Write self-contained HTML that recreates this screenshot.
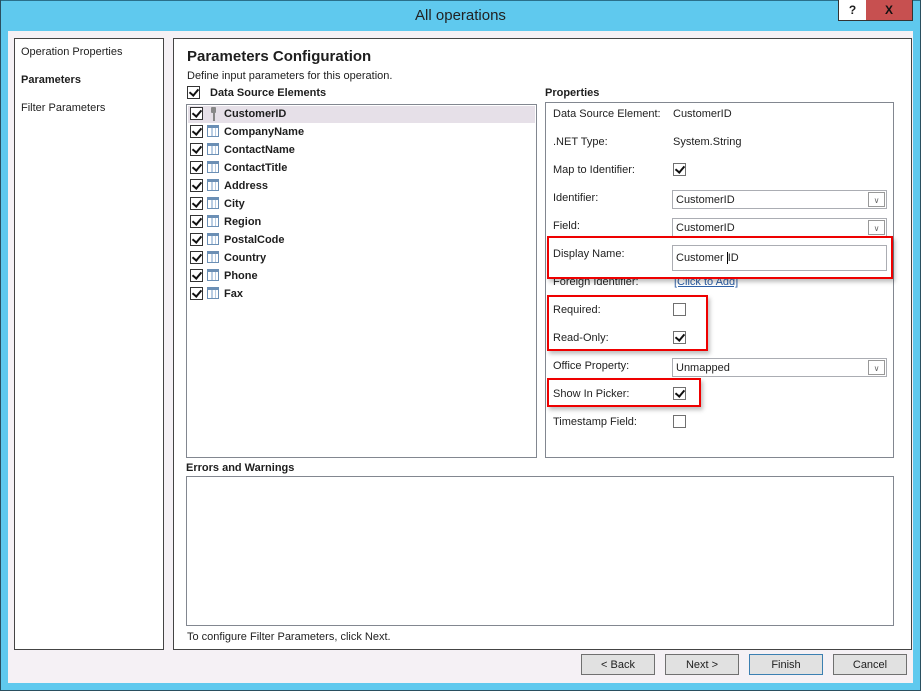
<!DOCTYPE html>
<html><head><meta charset="utf-8"><style>
*{margin:0;padding:0;box-sizing:border-box}
body{width:921px;height:691px;position:relative;overflow:hidden;background:#5fc9ee;font-family:"Liberation Sans",sans-serif;font-size:11px;color:#1e1e1e}
.a{position:absolute;white-space:nowrap}
.cb{position:absolute;width:13px;height:13px;border:1px solid #333;background:#fff}
.cb.k::after{content:"";position:absolute;left:3px;top:0px;width:4px;height:7px;border:solid #111;border-width:0 2px 2px 0;transform:rotate(40deg)}
.pc{border-color:#707070}
.ic{position:absolute;width:12px;height:12px;border:1px solid #6b8fb5;background:linear-gradient(90deg,#fff 0,#fff 3px,#b9cde3 3px,#b9cde3 5px,#fff 5px,#fff 7px,#b9cde3 7px,#b9cde3 8px,#fff 8px)}
.ic::before{content:"";position:absolute;left:0;right:0;top:0;height:2px;background:#6b8fb5}
.row{font-weight:bold;font-size:11px}
.lbl{color:#222}
.combo{position:absolute;left:672px;width:215px;height:19px;border:1px solid #abadb3;background:#fff;padding:3px 3px;font-size:11px}
.combo i{position:absolute;right:1px;top:1px;width:17px;height:15px;border:1px solid #999;background:#fff;font-style:normal;font-size:8px;color:#666;text-align:center;line-height:15px}
.red{position:absolute;border:2px solid #e00;box-shadow:2px 3px 4px rgba(0,0,0,.25)}
.btn{position:absolute;top:654px;width:74px;height:21px;border:1px solid #707070;background:#e1e1e1;text-align:center;line-height:20px;font-size:11px}
</style></head><body>
<div class="a" style="left:0;top:0;width:921px;height:31px;background:#5fc9ee;border-top:1px solid #2a6f8a"></div>
<div class="a" style="left:0;top:7px;width:921px;text-align:center;font-size:15px;color:#222">All operations</div>
<div class="a" style="left:838px;top:0;width:29px;height:21px;background:#fff;border:1px solid #333;border-top:none;text-align:center;font-weight:bold;font-size:12px;line-height:20px">?</div>
<div class="a" style="left:866px;top:0;width:47px;height:21px;background:#c75050;border:1px solid #333;border-top:none;border-left:none;text-align:center;font-weight:bold;font-size:12px;line-height:20px;color:#111">X</div>
<div class="a" style="left:8px;top:31px;width:905px;height:652px;background:#f5f1f5"></div>
<div class="a" style="left:0;top:0;width:1px;height:691px;background:#2a4f60"></div>
<div class="a" style="left:920px;top:0;width:1px;height:691px;background:#2a4f60"></div>
<div class="a" style="left:0;top:690px;width:921px;height:1px;background:#2a4f60"></div>

<div class="a" style="left:14px;top:38px;width:150px;height:612px;background:#fff;border:1px solid #444"></div>
<div class="a" style="left:21px;top:46px">Operation Properties</div>
<div class="a" style="left:21px;top:74px;font-weight:bold">Parameters</div>
<div class="a" style="left:21px;top:102px">Filter Parameters</div>

<div class="a" style="left:173px;top:38px;width:739px;height:612px;background:#fff;border:1px solid #444"></div>
<div class="a" style="left:187px;top:48px;font-size:15px;font-weight:bold">Parameters Configuration</div>
<div class="a" style="left:187px;top:70px">Define input parameters for this operation.</div>
<div class="cb k" style="left:187px;top:86px"></div>
<div class="a" style="left:210px;top:87px;font-weight:bold">Data Source Elements</div>
<div class="a" style="left:545px;top:87px;font-weight:bold">Properties</div>

<div class="a" style="left:186px;top:104px;width:351px;height:354px;border:1px solid #828790;background:#fff"></div>
<div class="a" style="left:188px;top:106px;width:347px;height:17px;background:#e6e0e8"></div>
<div class="cb k" style="left:190px;top:107px"></div>
<div class="a" style="left:211px;top:107px;width:5px;height:6px;background:#888;border-radius:1px"></div>
<div class="a" style="left:213px;top:112px;width:2px;height:9px;background:#888"></div>
<div class="a row" style="left:224px;top:108px">CustomerID</div>
<div class="cb k" style="left:190px;top:125px"></div><div class="ic" style="left:207px;top:125px"></div><div class="a row" style="left:224px;top:126px">CompanyName</div>
<div class="cb k" style="left:190px;top:143px"></div><div class="ic" style="left:207px;top:143px"></div><div class="a row" style="left:224px;top:144px">ContactName</div>
<div class="cb k" style="left:190px;top:161px"></div><div class="ic" style="left:207px;top:161px"></div><div class="a row" style="left:224px;top:162px">ContactTitle</div>
<div class="cb k" style="left:190px;top:179px"></div><div class="ic" style="left:207px;top:179px"></div><div class="a row" style="left:224px;top:180px">Address</div>
<div class="cb k" style="left:190px;top:197px"></div><div class="ic" style="left:207px;top:197px"></div><div class="a row" style="left:224px;top:198px">City</div>
<div class="cb k" style="left:190px;top:215px"></div><div class="ic" style="left:207px;top:215px"></div><div class="a row" style="left:224px;top:216px">Region</div>
<div class="cb k" style="left:190px;top:233px"></div><div class="ic" style="left:207px;top:233px"></div><div class="a row" style="left:224px;top:234px">PostalCode</div>
<div class="cb k" style="left:190px;top:251px"></div><div class="ic" style="left:207px;top:251px"></div><div class="a row" style="left:224px;top:252px">Country</div>
<div class="cb k" style="left:190px;top:269px"></div><div class="ic" style="left:207px;top:269px"></div><div class="a row" style="left:224px;top:270px">Phone</div>
<div class="cb k" style="left:190px;top:287px"></div><div class="ic" style="left:207px;top:287px"></div><div class="a row" style="left:224px;top:288px">Fax</div>

<div class="a" style="left:545px;top:102px;width:349px;height:356px;border:1px solid #828790;background:#fff"></div>
<div class="a lbl" style="left:553px;top:108px">Data Source Element:</div><div class="a" style="left:673px;top:108px">CustomerID</div>
<div class="a lbl" style="left:553px;top:136px">.NET Type:</div><div class="a" style="left:673px;top:136px">System.String</div>
<div class="a lbl" style="left:553px;top:164px">Map to Identifier:</div><div class="cb k pc" style="left:673px;top:163px"></div>
<div class="a lbl" style="left:553px;top:192px">Identifier:</div><div class="combo" style="top:190px">CustomerID<i>&#x2228;</i></div>
<div class="a lbl" style="left:553px;top:220px">Field:</div><div class="combo" style="top:218px">CustomerID<i>&#x2228;</i></div>
<div class="a lbl" style="left:553px;top:248px">Display Name:</div>
<div class="a" style="left:672px;top:245px;width:215px;height:26px;border:1px solid #abadb3;background:#fff;padding:6px 3px">Customer <span style="border-left:1px solid #000">ID</span></div>
<div class="a lbl" style="left:553px;top:276px">Foreign Identifier:</div><div class="a" style="left:674px;top:276px;color:#2d5fa6;text-decoration:underline">[Click to Add]</div>
<div class="a lbl" style="left:553px;top:304px">Required:</div><div class="cb pc" style="left:673px;top:303px"></div>
<div class="a lbl" style="left:553px;top:332px">Read-Only:</div><div class="cb k pc" style="left:673px;top:331px"></div>
<div class="a lbl" style="left:553px;top:360px">Office Property:</div><div class="combo" style="top:358px">Unmapped<i>&#x2228;</i></div>
<div class="a lbl" style="left:553px;top:388px">Show In Picker:</div><div class="cb k pc" style="left:673px;top:387px"></div>
<div class="a lbl" style="left:553px;top:416px">Timestamp Field:</div><div class="cb pc" style="left:673px;top:415px"></div>

<div class="red" style="left:547px;top:236px;width:346px;height:43px"></div>
<div class="red" style="left:547px;top:295px;width:161px;height:56px"></div>
<div class="red" style="left:547px;top:378px;width:154px;height:29px"></div>

<div class="a" style="left:186px;top:462px;font-weight:bold">Errors and Warnings</div>
<div class="a" style="left:186px;top:476px;width:708px;height:150px;border:1px solid #828790;background:#fff"></div>
<div class="a" style="left:187px;top:631px">To configure Filter Parameters, click Next.</div>

<div class="btn" style="left:581px">&lt; Back</div>
<div class="btn" style="left:665px">Next &gt;</div>
<div class="btn" style="left:749px;border-color:#3c7fb1">Finish</div>
<div class="btn" style="left:833px">Cancel</div>
</body></html>
